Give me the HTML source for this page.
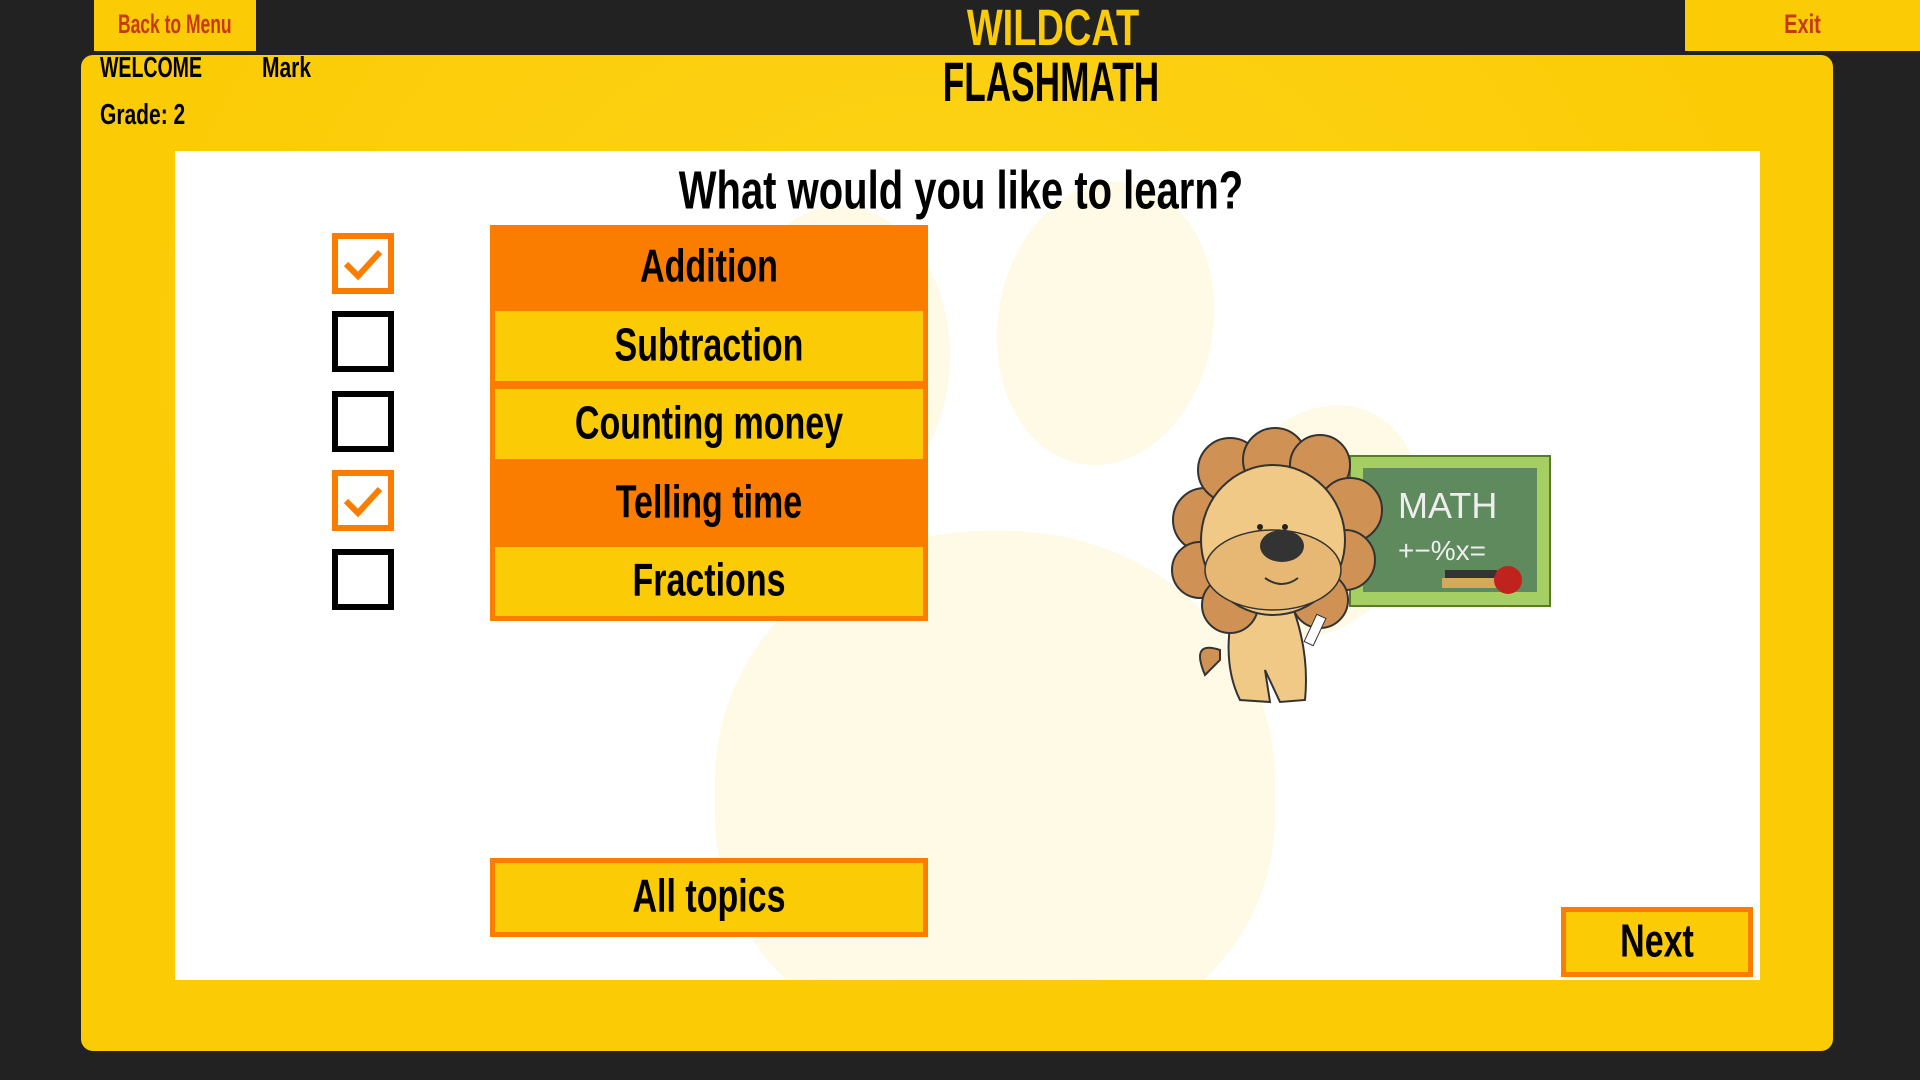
<!DOCTYPE html>
<html><head><meta charset="utf-8"><style>
*{margin:0;padding:0;box-sizing:border-box}
body{width:1920px;height:1080px;background:#222;position:relative;overflow:hidden;font-family:"Liberation Sans Narrow","Liberation Sans",sans-serif;font-weight:bold}
.c{display:flex;align-items:center;justify-content:center}
.st{display:inline-block;transform:scaleY(1.35)}
#panel{position:absolute;left:81px;top:55px;width:1752px;height:996px;background:radial-gradient(ellipse at 50% 30%,#fdd41a,#fbcb05 70%);border-radius:12px}
#white{position:absolute;left:175px;top:151px;width:1585px;height:829px;background:#fff;overflow:hidden}
.paw{position:absolute;background:#fffae6;border-radius:50%}
.cb{position:absolute;left:332px;width:62px;height:61px;border:6px solid #000;background:#fff}
.cb.on{border-color:#fb7d00}
.row{position:absolute;left:495px;width:428px;font-size:34px;color:#000}
</style></head><body>
<div class="c" style="position:absolute;left:94px;top:0;width:162px;height:51px;background:#fbcb05;color:#c8380c;font-size:19px"><span class="st" style="transform:scale(0.92,1.4)">Back to Menu</span></div>
<div class="c" style="position:absolute;left:1685px;top:0;width:235px;height:51px;background:#fbcb05;color:#c8380c;font-size:20px"><span class="st">Exit</span></div>
<div class="c" style="position:absolute;left:853px;top:4px;width:400px;height:50px;color:#fbcb05;font-size:38px"><span class="st">WILDCAT</span></div>
<div id="panel"></div>
<div class="c" style="position:absolute;left:851px;top:58px;width:400px;height:50px;color:#000;font-size:40px"><span class="st" style="transform:scale(0.88,1.4)">FLASHMATH</span></div>
<div style="position:absolute;left:100px;top:57px;font-size:21px;color:#000"><span class="st" style="transform:scale(0.93,1.35);transform-origin:left">WELCOME</span></div>
<div style="position:absolute;left:262px;top:57px;font-size:21px;color:#000"><span class="st">Mark</span></div>
<div style="position:absolute;left:100px;top:104px;font-size:21px;color:#000"><span class="st">Grade: 2</span></div>
<div id="white">
 <div class="paw" style="left:555px;top:55px;width:220px;height:300px"></div>
 <div class="paw" style="left:823px;top:30px;width:215px;height:285px;transform:rotate(10deg)"></div>
 <div class="paw" style="left:1050px;top:250px;width:190px;height:240px;transform:rotate(25deg)"></div>
 <div class="paw" style="left:540px;top:380px;width:560px;height:520px;border-radius:48% 48% 45% 45%"></div>
</div>
<div class="c" style="position:absolute;left:561px;top:160px;width:800px;height:62px;font-size:40px;color:#000"><span class="st">What would you like to learn?</span></div>

<div class="cb on" style="top:233px"></div>
<div class="cb" style="top:311px"></div>
<div class="cb" style="top:391px"></div>
<div class="cb on" style="top:470px"></div>
<div class="cb" style="top:549px"></div>
<svg style="position:absolute;left:332px;top:233px" width="62" height="61"><path d="M14 31 L26 43 L48 19" stroke="#fb7d00" stroke-width="6" fill="none"/></svg>
<svg style="position:absolute;left:332px;top:470px" width="62" height="61"><path d="M14 31 L26 43 L48 19" stroke="#fb7d00" stroke-width="6" fill="none"/></svg>

<div style="position:absolute;left:490px;top:225px;width:438px;height:396px;background:#fb7d00"></div>
<div class="row c" style="top:225px;height:84px;background:#fb7d00"><span class="st">Addition</span></div>
<div class="row c" style="top:311px;height:70px;background:#fbcb05"><span class="st">Subtraction</span></div>
<div class="row c" style="top:389px;height:70px;background:#fbcb05"><span class="st">Counting money</span></div>
<div class="row c" style="top:463px;height:80px;background:#fb7d00"><span class="st">Telling time</span></div>
<div class="row c" style="top:547px;height:69px;background:#fbcb05"><span class="st">Fractions</span></div>

<div class="c" style="position:absolute;left:490px;top:858px;width:438px;height:79px;background:#fbcb05;border:5px solid #fb7d00;font-size:34px"><span class="st">All topics</span></div>
<div class="c" style="position:absolute;left:1561px;top:907px;width:192px;height:70px;background:#fbcb05;border:5px solid #fb7d00;font-size:34px"><span class="st">Next</span></div>

<svg style="position:absolute;left:1160px;top:420px" width="410" height="290" viewBox="0 0 410 290">
 <rect x="190" y="36" width="200" height="150" fill="#a5cf62" stroke="#5a7a2a" stroke-width="2"/>
 <rect x="203" y="48" width="174" height="124" fill="#5f8a5e"/>
 <text x="238" y="98" font-family="Liberation Sans" font-weight="normal" font-size="36" fill="#eee">MATH</text>
 <text x="238" y="140" font-family="Liberation Sans" font-weight="normal" font-size="28" fill="#eee">+−%x=</text>
 <rect x="282" y="158" width="60" height="10" fill="#d8a85a"/><rect x="285" y="150" width="52" height="8" fill="#333"/>
 <circle cx="348" cy="160" r="14" fill="#c0231d"/>
 <path d="M60 230 Q30 220 45 255 L60 240 Z" fill="#cf9254" stroke="#333" stroke-width="2"/>
 <path d="M75 180 Q60 240 80 280 L110 282 L105 250 L120 282 L145 280 Q150 230 130 180 Z" fill="#efc985" stroke="#333" stroke-width="2"/>
 <g fill="#cf9254" stroke="#333" stroke-width="2">
  <circle cx="45" cy="100" r="32"/><circle cx="40" cy="150" r="28"/><circle cx="70" cy="50" r="32"/><circle cx="115" cy="40" r="32"/><circle cx="160" cy="45" r="30"/><circle cx="190" cy="90" r="32"/><circle cx="185" cy="140" r="30"/><circle cx="70" cy="185" r="28"/><circle cx="160" cy="180" r="28"/>
 </g>
 <ellipse cx="113" cy="120" rx="72" ry="75" fill="#efc985" stroke="#333" stroke-width="2"/>
 <ellipse cx="113" cy="150" rx="68" ry="40" fill="#e6b873" stroke="#333" stroke-width="1.5"/>
 <ellipse cx="122" cy="126" rx="22" ry="16" fill="#333"/>
 <circle cx="100" cy="107" r="3" fill="#222"/><circle cx="125" cy="107" r="3" fill="#222"/>
 <path d="M105 158 Q122 170 138 158" stroke="#333" stroke-width="2" fill="none"/>
 <rect x="150" y="195" width="10" height="30" fill="#fff" stroke="#333" transform="rotate(25 155 210)"/>
</svg>
</body></html>
